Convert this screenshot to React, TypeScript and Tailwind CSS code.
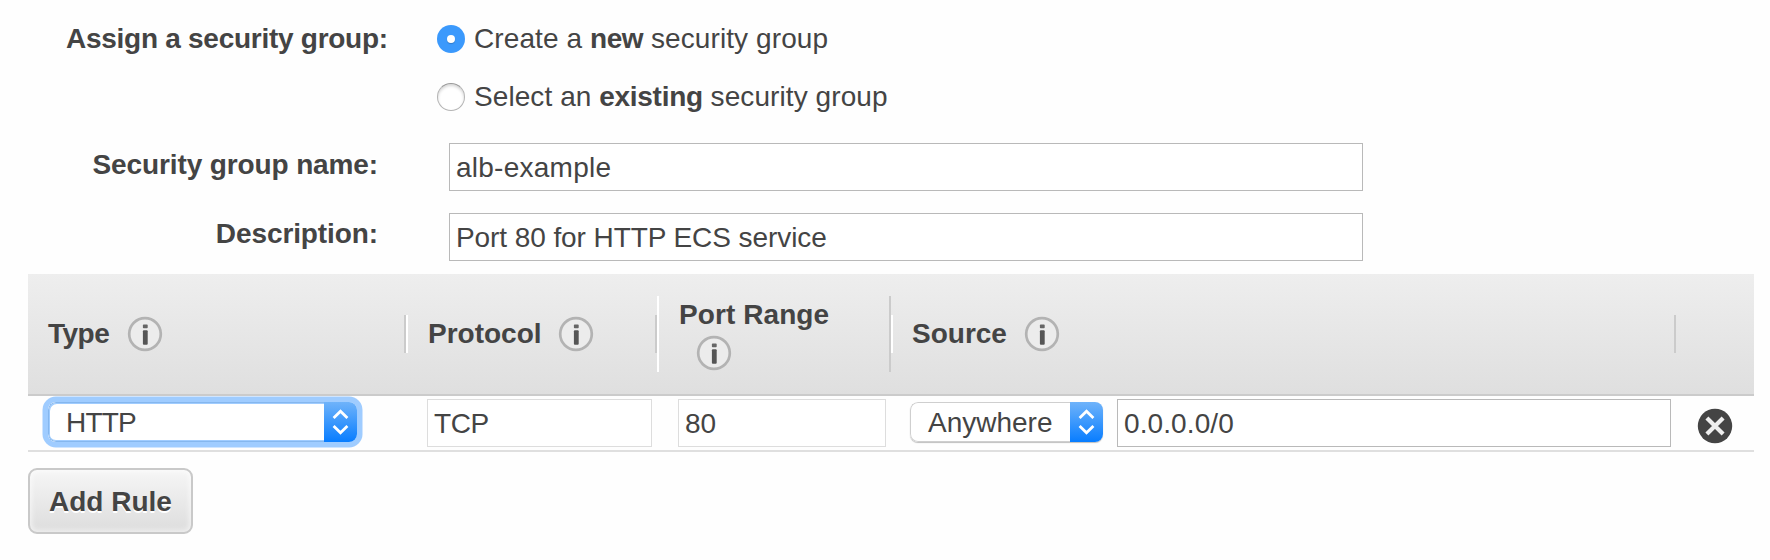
import type { ReactNode } from "react";

function InfoIcon({ className = "" }: { className?: string }) {
  return (
    <svg className={`h-9 w-9 shrink-0 ${className}`} viewBox="0 0 36 36">
      <circle cx="18" cy="18" r="15.8" fill="#ececec" stroke="#b3b3b3" strokeWidth="2.7" />
      <rect x="15.9" y="8.6" width="4.8" height="3.6" rx="0.8" fill="#666666" />
      <rect x="15.9" y="14.2" width="4.8" height="14.6" rx="1" fill="#555555" />
    </svg>
  );
}

function DeleteIcon() {
  return (
    <svg className="h-9 w-9" viewBox="0 0 36 36">
      <circle cx="18" cy="18" r="17.2" fill="#444444" />
      <path d="M9.9 9.9 L26.1 26.1 M26.1 9.9 L9.9 26.1" stroke="#eeeeee" strokeWidth="4.2" fill="none" />
    </svg>
  );
}

function Radio({ checked = false }: { checked?: boolean }) {
  return checked ? (
    <span className="flex h-7 w-7 items-center justify-center rounded-full bg-[#3b99fc]">
      <span className="h-2 w-2 rounded-full bg-white shadow-[0_1px_1px_rgba(0,0,0,0.2)]" />
    </span>
  ) : (
    <span className="h-7 w-7 rounded-full border border-[#b4b4b4] border-t-[#999999] bg-white shadow-[inset_0_2px_3px_rgba(0,0,0,0.16)]" />
  );
}

function RadioRow({ checked, children }: { checked?: boolean; children: ReactNode }) {
  return (
    <div className="flex h-[38px] items-center gap-[9px]">
      <Radio checked={checked} />
      <span className="whitespace-pre">{children}</span>
    </div>
  );
}

function Field({ className, children }: { className: string; children: ReactNode }) {
  return <div className={`flex h-12 items-center border bg-white pt-0.5 pl-1.5 ${className}`}>{children}</div>;
}

function Select({ focused = false, className, children }: { focused?: boolean; className: string; children: ReactNode }) {
  return (
    <div
      className={`flex h-10 overflow-hidden rounded-lg bg-white ${
        focused ? "shadow-[0_0_0_5.5px_#9fccff]" : "shadow-[0_1px_1px_rgba(0,0,0,0.25)]"
      } ${className}`}
    >
      <div
        className={`flex grow items-center rounded-l-lg border-y border-l pt-0.5 pl-[17px] ${
          focused ? "border-[#85b7ee] shadow-[inset_1px_1px_0_#9fccff,inset_0_-1px_0_#9fccff]" : "border-[#cfcfcf]"
        }`}
      >
        {children}
      </div>
      <svg className="h-10 w-[33px] shrink-0" viewBox="0 0 33 40">
        <defs>
          <linearGradient id="stepper" x1="0" y1="0" x2="0" y2="1">
            <stop offset="0" stopColor="#6fb3fa" />
            <stop offset="1" stopColor="#087dff" />
          </linearGradient>
        </defs>
        <rect width="33" height="40" fill="url(#stepper)" />
        <path
          d="M9.6 16 L16.5 9.2 L23.4 16 M9.6 24 L16.5 30.8 L23.4 24"
          fill="none"
          stroke="#ffffff"
          strokeWidth="2.8"
        />
      </svg>
    </div>
  );
}

export default function App() {
  return (
    <div className="h-[560px] w-[1770px] overflow-hidden bg-[#fefefe] pt-5 font-['Liberation_Sans',Arial,sans-serif] text-[28px] leading-[38px] text-[#444444]">
      <div className="flex pr-10">
        <div className="w-[437px] pl-[66px] font-bold tracking-[-0.27px]">
          <span className="whitespace-nowrap">Assign a security group:</span>
        </div>
        <div className="flex flex-col gap-5">
          <RadioRow checked>
            <span className="tracking-[0.1px]">Create a <b className="tracking-[-0.5px]">new</b> security group</span>
          </RadioRow>
          <RadioRow>
            <span className="tracking-[0.08px]">Select an <b className="tracking-[-0.3px]">existing</b> security group</span>
          </RadioRow>
        </div>
      </div>

      <div className="mt-[27px] flex flex-col gap-[22px]">
        <div className="flex">
          <div className="mr-[71px] w-[378px] pt-[3px] text-right font-bold tracking-[-0.12px]">Security group name:</div>
          <Field className="w-[914px] border-[#b9b9b9] tracking-[0.25px]">alb-example</Field>
        </div>
        <div className="flex">
          <div className="mr-[71px] w-[378px] pt-[2px] text-right font-bold tracking-[-0.1px]">Description:</div>
          <Field className="w-[914px] border-[#b9b9b9] tracking-[-0.08px]">Port 80 for HTTP ECS service</Field>
        </div>
      </div>

      <div className="mt-[13px] ml-7 w-[1726px]">
        <div className="flex h-[122px] items-center border-b-2 border-[#cbcbcb] bg-linear-to-b from-[#eeeeee] to-[#dfdfdf] font-bold">
          <div className="flex h-[38px] w-[378px] items-center border-r-2 border-[#cbcbcb] pl-5">
            <span className="tracking-[-0.5px]">Type</span>
            <InfoIcon className="ml-[18px]" />
          </div>
          <div className="flex h-[38px] w-[251px] items-center border-r-2 border-l-2 border-r-[#cbcbcb] border-l-white pl-5">
            <span>Protocol</span>
            <InfoIcon className="ml-4" />
          </div>
          <div className="flex h-[76px] w-[234px] flex-col border-r-2 border-l-2 border-r-[#cbcbcb] border-l-white pl-5">
            <span className="tracking-[0.08px]">Port Range</span>
            <InfoIcon className="mt-px ml-[17px]" />
          </div>
          <div className="flex h-[38px] w-[785px] items-center border-r-2 border-l-2 border-r-[#cbcbcb] border-l-white pl-[19px]">
            <span>Source</span>
            <InfoIcon className="ml-[17px]" />
          </div>
        </div>
        <div className="flex h-14 items-start border-b-2 border-[#dfdfdf] pt-[3px]">
          <Select focused className="mt-[3px] ml-5 w-[309px] tracking-[-0.8px]">HTTP</Select>
          <Field className="ml-[70px] w-[225px] border-[#dddddd] tracking-[-0.4px]">TCP</Field>
          <Field className="ml-[26px] w-[208px] border-[#dddddd]">80</Field>
          <Select className="mt-[3px] ml-6 w-[193px]">Anywhere</Select>
          <Field className="ml-[14px] w-[554px] border-[#b9b9b9] tracking-[0.1px]">0.0.0.0/0</Field>
          <div className="mt-[9px] ml-[26px]">
            <DeleteIcon />
          </div>
        </div>
      </div>

      <button className="mt-4 ml-7 flex h-[66px] w-[165px] items-center justify-center rounded-[9px] border-2 border-[#c9c9c9] bg-linear-to-b from-[#f6f6f6] to-[#dddddd] pt-0.5 font-bold shadow-[inset_0_0_5px_2px_rgba(255,255,255,0.55)] [text-shadow:0_2px_0_#ffffff]">
        Add Rule
      </button>
    </div>
  );
}
